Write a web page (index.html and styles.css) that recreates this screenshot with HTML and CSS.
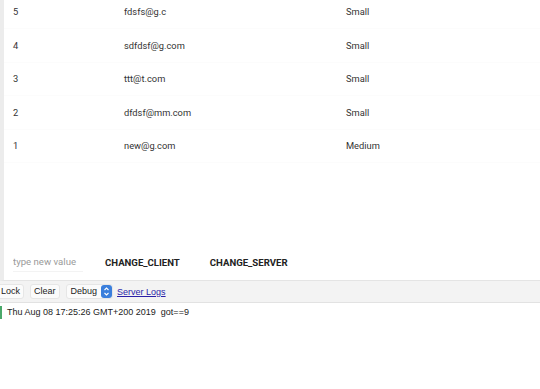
FILE: index.html
```html
<!DOCTYPE html>
<html lang="en">
<head>
    <meta charset="UTF-8">
    <title>Client / Server values</title>
    <link rel="stylesheet" href="styles.css">
</head>
<body>

    <!-- Table panel -->
    <div class="panel">
        <div class="rows">
            <div class="row"><span class="c-id">5</span><span class="c-mail">fdsfs@g.c</span><span class="c-size">Small</span></div>
            <div class="row"><span class="c-id">4</span><span class="c-mail">sdfdsf@g.com</span><span class="c-size">Small</span></div>
            <div class="row"><span class="c-id">3</span><span class="c-mail">ttt@t.com</span><span class="c-size">Small</span></div>
            <div class="row"><span class="c-id">2</span><span class="c-mail">dfdsf@mm.com</span><span class="c-size">Small</span></div>
            <div class="row"><span class="c-id">1</span><span class="c-mail">new@g.com</span><span class="c-size">Medium</span></div>
        </div>

        <div class="controls">
            <input class="new-value" type="text" placeholder="type new value">
            <span class="action">CHANGE_CLIENT</span>
            <span class="action">CHANGE_SERVER</span>
        </div>
    </div>

    <!-- Debug console -->
    <div class="toolbar">
        <span class="btn btn-cut">Lock</span>
        <span class="btn">Clear</span>
        <span class="select">Debug<i class="stepper"><svg width="7" height="11" viewBox="0 0 7 11"><path d="M1.5 4 L3.5 2 L5.5 4 M1.5 7 L3.5 9 L5.5 7" fill="none" stroke="#fff" stroke-width="1.1"/></svg></i></span>
        <a href="#" class="logs-link">Server Logs</a>
    </div>

    <div class="log">
        <div class="log-line">Thu Aug 08 17:25:26 GMT+200 2019&nbsp; got==9</div>
    </div>

</body>
</html>
```

FILE: styles.css
```css
body {
    margin: 0;
    background-color: #ffffff;
    font-family: Roboto, "Liberation Sans", sans-serif;
    color: #333333;
    height: 389px;
    overflow: hidden;
}

.panel {
    height: 281px;
    box-sizing: border-box;
    border-left: 4px solid #ececec;
    border-bottom: 1px solid #e4e4e4;
    display: flex;
    flex-direction: column;
    overflow: hidden;
}

.rows {
    margin-top: -4.5px;
}

.row {
    display: flex;
    align-items: center;
    height: 33.5px;
    font-size: 9.3px;
    border-bottom: 1px solid #fcfcfc;
    box-sizing: border-box;
}

.c-id {
    width: 111px;
    padding-left: 9px;
}

.c-mail {
    width: 222px;
}

.c-size {
    flex: 1;
}

.controls {
    margin-top: auto;
    height: 36px;
    display: flex;
    align-items: center;
    padding-left: 9px;
}

.new-value {
    width: 70px;
    border: none;
    border-bottom: 1px solid #f3f3f3;
    padding: 4px 0;
    font-family: Roboto, "Liberation Sans", sans-serif;
    font-size: 9.6px;
    color: #333;
    outline: none;
    margin-right: 22px;
}

.new-value::placeholder {
    color: #9a9a9a;
}

.action {
    font-size: 9.6px;
    font-weight: 700;
    color: #222;
    margin-right: 30px;
}

.toolbar {
    height: 21px;
    background-color: #f3f3f3;
    border-bottom: 1px solid #e2e2e2;
    display: flex;
    align-items: center;
    font-family: "Liberation Sans", sans-serif;
    font-size: 9px;
    color: #222;
}

.btn {
    background: #fbfbfb;
    border: 1px solid #e6e6e6;
    border-radius: 3px;
    padding: 1px 3px;
    margin-left: 6px;
    line-height: 11px;
}

.btn-cut {
    margin-left: -3px;
}

.select {
    display: flex;
    align-items: center;
    background: #fbfbfb;
    border: 1px solid #e6e6e6;
    border-radius: 3px;
    margin-left: 6px;
    padding-left: 4px;
    line-height: 11px;
    height: 13px;
}

.stepper {
    display: flex;
    align-items: center;
    justify-content: center;
    width: 11px;
    height: 13px;
    margin-left: 4px;
    background: #3b7fdc;
    border-radius: 3px;
}

.logs-link {
    margin-left: 4px;
    color: #2a1fa8;
    font-size: 9px;
}

.log {
    padding-top: 3px;
}

.log-line {
    border-left: 2px solid #4aa86a;
    padding-left: 5px;
    font-family: "Liberation Sans", sans-serif;
    font-size: 9px;
    color: #222;
    line-height: 13px;
}
```
